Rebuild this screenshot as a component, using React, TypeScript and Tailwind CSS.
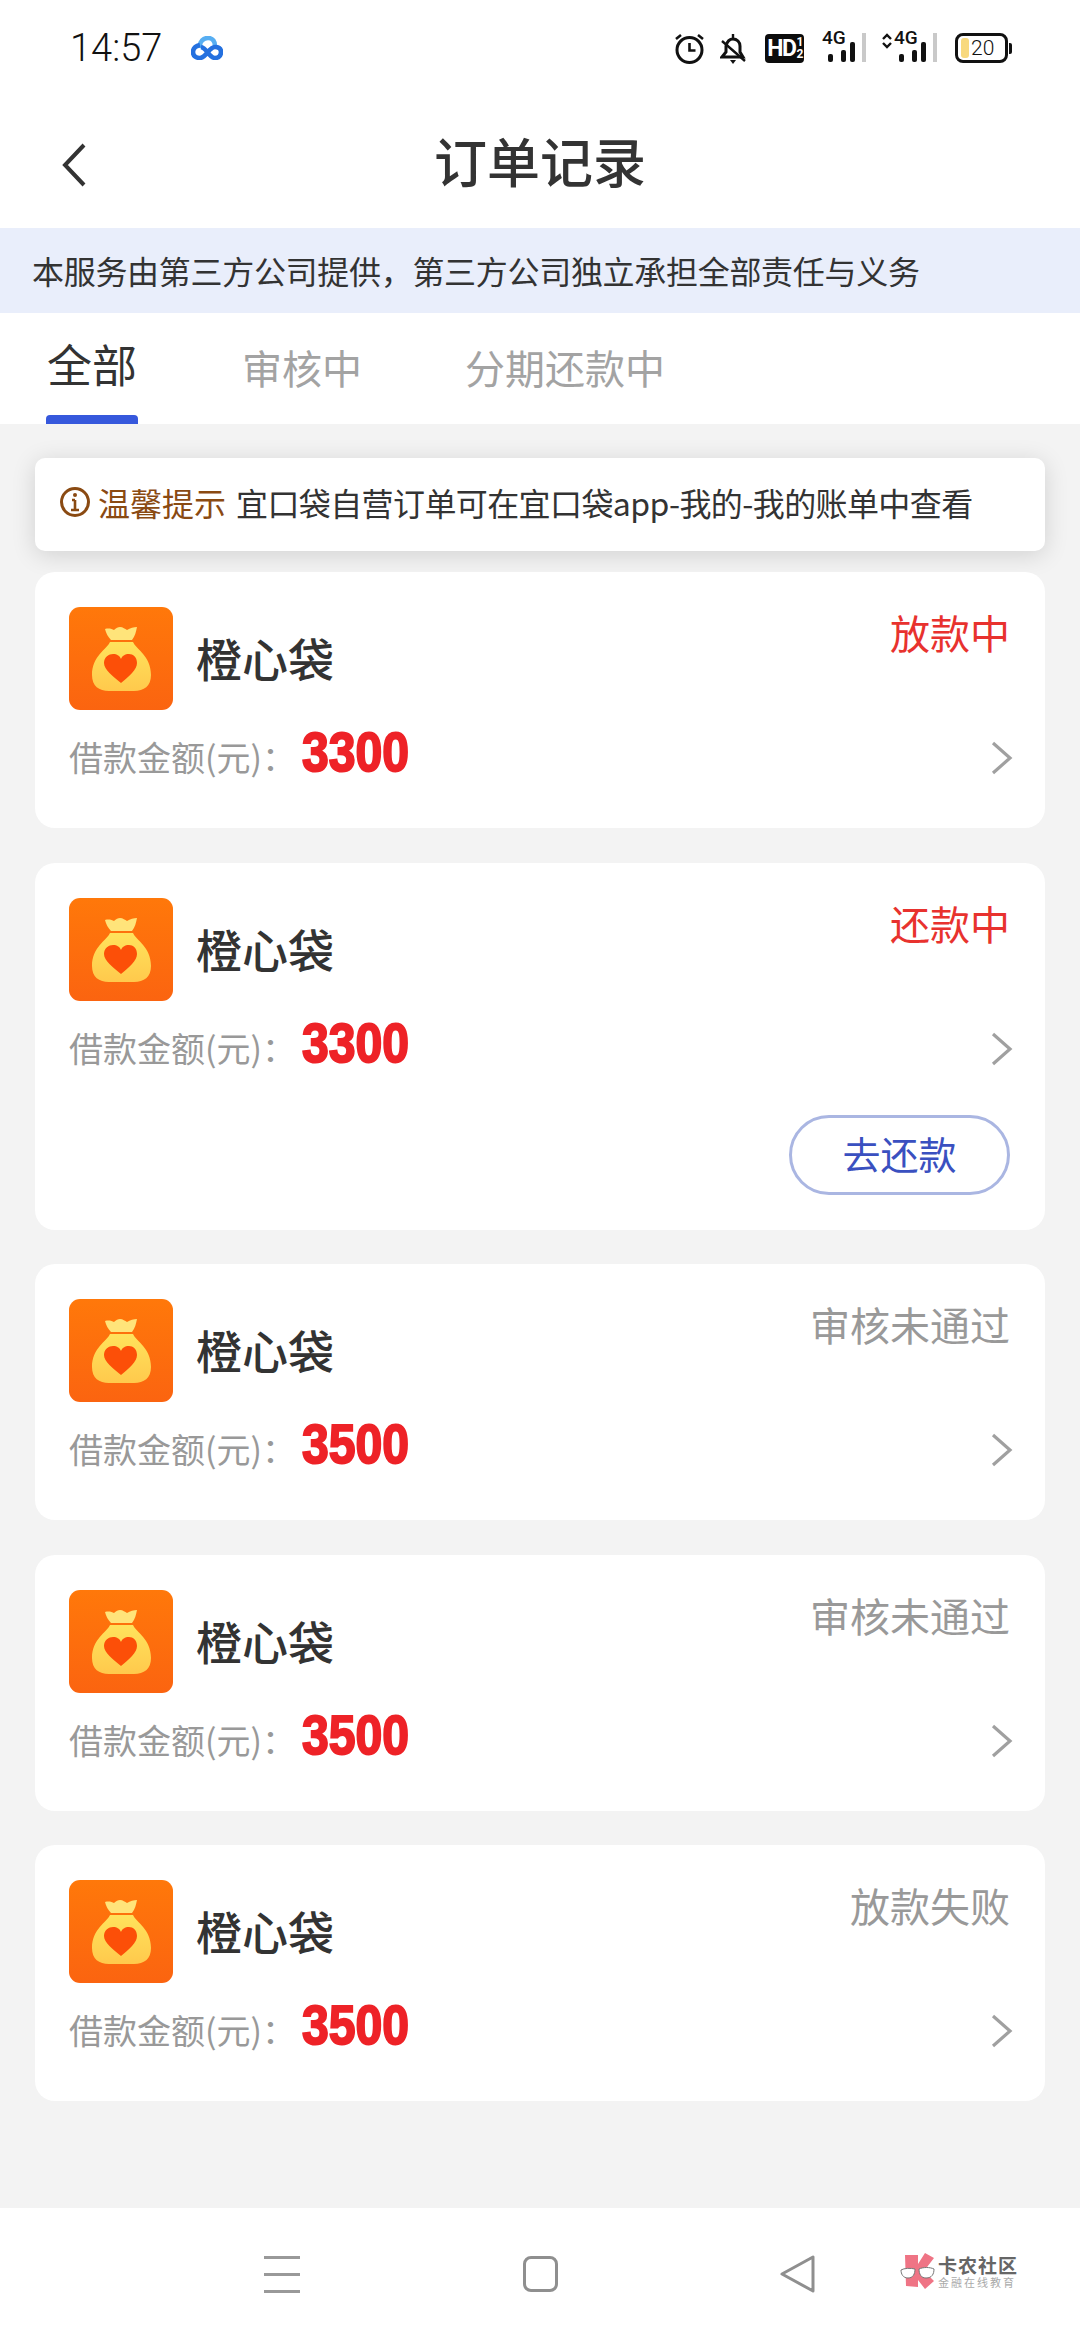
const orders = [
  { status: "放款中", color: "text-[#e8322e]", amount: "3300" },
  { status: "还款中", color: "text-[#e8322e]", amount: "3300", repay: true },
  { status: "审核未通过", color: "text-[#999999]", amount: "3500" },
  { status: "审核未通过", color: "text-[#999999]", amount: "3500" },
  { status: "放款失败", color: "text-[#999999]", amount: "3500" },
];

const BagLogo = () => (
  <svg width="104" height="103" viewBox="0 0 104 103" className="shrink-0">
    <defs>
      <linearGradient id="bagBg" x1="0" y1="0" x2="0" y2="1">
        <stop offset="0" stopColor="#ff780a" />
        <stop offset="1" stopColor="#fb6410" />
      </linearGradient>
      <linearGradient id="bagBody" x1="0" y1="0" x2="0" y2="1">
        <stop offset="0" stopColor="#ffe35c" />
        <stop offset="1" stopColor="#ffc94c" />
      </linearGradient>
    </defs>
    <rect width="104" height="103" rx="11" fill="url(#bagBg)" />
    <path d="M36 22c4-1 7 0 9 1 2-2 4-3 6-3 3 0 5 2 7 3 3-2 7-3 10-3-1 5-2 9-5 13H42c-3-3-5-7-6-11z" fill="#ffe47a" />
    <path d="M41 35h23c3 7 18 14 18 33 0 11-7 16-17 16H40c-10 0-17-5-17-16 0-19 15-26 18-33z" fill="url(#bagBody)" />
    <path d="M52 76C44 69 35 63 35 56c0-6 5-9 9-9 4 0 7 2 8 5 1-3 4-5 8-5 4 0 8 3 8 9 0 7-8 13-16 20z" fill="#fc4f08" />
  </svg>
);

const StatusIcons = () => (
  <div className="flex items-center">
    <svg width="31" height="32" viewBox="0 0 31 32" fill="none" stroke="#111" strokeWidth="3">
      <circle cx="15.5" cy="18" r="12.5" />
      <path d="M15.5 11v7.5h6M2 7l5-4M29 7l-5-4" strokeWidth="2.6" />
    </svg>
    <svg width="27" height="31" viewBox="0 0 27 31" fill="none" stroke="#111" strokeWidth="3" className="ml-[15px]">
      <path d="M2 24h21l-3-5v-6c0-4-3-7-7-7s-6 3-7 7v6z" />
      <path d="M13 1v4M2 8l23 20" strokeWidth="2.4" />
      <path d="M10 27h6l-3 4z" fill="#111" stroke="none" />
    </svg>
    <div className="ml-[18px] flex h-[29px] w-[39px] items-center justify-center rounded-[4px] bg-[#0c0c0c] font-['Roboto',sans-serif] text-[23px] leading-none font-bold tracking-[-1.5px] text-white">
      HD
      <span className="ml-[1px] flex flex-col text-[12px] leading-[12px]">
        <span>1</span>
        <span>2</span>
      </span>
    </div>
    <div className="relative ml-[18px] h-[30px] w-[44px]">
      <span className="absolute top-[-4px] left-0 font-['Roboto',sans-serif] text-[19px] leading-[18px] font-medium text-[#111]">4G</span>
      <svg width="44" height="30" viewBox="0 0 44 30">
        <rect x="6" y="21" width="5" height="8" rx="2" fill="#111" />
        <rect x="19" y="17" width="5" height="12" rx="2" fill="#111" />
        <rect x="28" y="9" width="5" height="20" rx="2" fill="#111" />
        <rect x="40" y="0" width="4" height="29" fill="#c9c9c9" />
      </svg>
    </div>
    <div className="relative ml-[16px] h-[30px] w-[55px]">
      <span className="absolute top-[-4px] left-[12px] font-['Roboto',sans-serif] text-[19px] leading-[18px] font-medium text-[#111]">4G</span>
      <svg width="55" height="30" viewBox="0 0 55 30">
        <path d="M1 6l4-4 4 4M1 10l4 4 4-4" fill="none" stroke="#111" strokeWidth="2.4" />
        <rect x="17" y="21" width="5" height="8" rx="2" fill="#111" />
        <rect x="30" y="17" width="5" height="12" rx="2" fill="#111" />
        <rect x="39" y="9" width="5" height="20" rx="2" fill="#111" />
        <rect x="51" y="0" width="4" height="29" fill="#c9c9c9" />
      </svg>
    </div>
    <div className="ml-[18px] flex items-center">
      <div className="relative flex h-[30px] w-[53px] items-center rounded-[8px] border-[3px] border-[#111] pl-[13px] font-['Roboto',sans-serif] text-[21px] leading-none font-light text-[#111]">
        <span className="absolute top-[2px] left-[3px] h-[20px] w-[8px] rounded-[3px] bg-[#f8d97e]" />
        <span className="relative">20</span>
      </div>
      <span className="ml-[1px] h-[11px] w-[3px] rounded-r-[2px] bg-[#111]" />
    </div>
  </div>
);

const OrderCard = ({ status, color, amount, repay }: { status: string; color: string; amount: string; repay?: boolean }) => (
  <div className="mx-[35px] mt-[34.5px] rounded-[20px] bg-white pt-[35px] pr-[35px] pb-[43px] pl-[34px] first:mt-[21px] has-[button]:pb-[35px]">
    <div className="flex items-start justify-between">
      <div className="flex items-center">
        <BagLogo />
        <span className="ml-[23px] pb-[3px] text-[46px] leading-[60px] font-medium text-[#333333]">橙心袋</span>
      </div>
      <span className={`mt-[-2px] text-[40px] leading-[54px] ${color}`}>{status}</span>
    </div>
    <div className="mt-[21px] flex h-[54px] items-center">
      <span className="w-[233px] pb-[2px] text-[34px] leading-[52px] text-[#999999]">借款金额(元)：</span>
      <span className="mb-[12px] origin-left scale-x-[0.86] font-['Liberation_Sans',sans-serif] text-[56px] leading-[48px] font-bold text-[#ee2227] [-webkit-text-stroke:2px_#ee2227]">
        {amount}
      </span>
      <svg width="22" height="34" viewBox="0 0 22 34" fill="none" stroke="#a0a0a0" strokeWidth="3.2" className="mr-[-3px] ml-auto">
        <path d="M2 2l17 15L2 32" />
      </svg>
    </div>
    {repay && (
      <div className="mt-[39px] flex justify-end">
        <button className="h-[80px] w-[221px] rounded-full border-[3px] border-[#aab6e2] pb-[4px] text-[38px] text-[#3a50c0]">去还款</button>
      </div>
    )}
  </div>
);

export default function App() {
  return (
    <div className="flex h-[2340px] w-[1080px] flex-col overflow-hidden bg-[#f3f3f3] font-['Noto_Sans_CJK_SC','Noto_Sans',sans-serif]">
      <div className="flex h-[228px] flex-col bg-white">
        <div className="flex h-[96px] items-center pr-[68px] pl-[70px]">
          <span className="font-['Roboto',sans-serif] text-[38px] leading-none font-light text-[#111]">14:57</span>
          <svg width="32" height="24" viewBox="0 0 32 24" fill="none" strokeWidth="4.6" className="ml-[29px]">
            <path d="M9 12C8 5 13 2 17 2c5 0 7 4 7 8" stroke="#57aef2" />
            <path d="M9 9c-4 1-7 3-7 7s3 6 7 6c6 0 9-11 15-11 4 0 6 2 6 5s-2 6-6 6c-6 0-8-10-14-11" stroke="#2470df" />
          </svg>
          <div className="ml-auto">
            <StatusIcons />
          </div>
        </div>
        <div className="relative flex flex-1 items-center justify-center">
          <svg width="30" height="46" viewBox="0 0 30 46" fill="none" stroke="#333" strokeWidth="4" className="absolute top-[46px] left-[60px]">
            <path d="M24 3L5 23l19 20" />
          </svg>
          <span className="mb-[4px] text-[53px] leading-none font-medium text-[#333333]">订单记录</span>
        </div>
      </div>

      <div className="flex h-[85px] items-center bg-[#e9eefb] pb-[2px] pl-[32px] text-[32px] leading-none tracking-[-0.3px] text-[#333333]">
        本服务由第三方公司提供，第三方公司独立承担全部责任与义务
      </div>

      <div className="flex h-[111px] items-start bg-white pl-[46px]">
        <div className="flex h-full w-[92px] flex-col items-center justify-between pt-[20px]">
          <span className="text-[45px] leading-[62px] text-[#333333]">全部</span>
          <span className="h-[9px] w-full rounded-t-[4px] bg-[#3658dc]" />
        </div>
        <span className="mt-[24px] ml-[104px] text-[40px] leading-[60px] text-[#a3a3a3]">审核中</span>
        <span className="mt-[24px] ml-[103px] text-[40px] leading-[60px] text-[#a3a3a3]">分期还款中</span>
      </div>

      <div className="mx-[35px] mt-[34px] flex h-[93px] items-center rounded-[10px] bg-white pb-[6px] pl-[24px] text-[32px] leading-none text-[#333333] shadow-[0_4px_24px_rgba(0,0,0,0.14)]">
        <svg width="32" height="32" viewBox="0 0 32 32" fill="none" stroke="#8a4a12" strokeWidth="3" className="mr-[7px]">
          <circle cx="16" cy="16" r="13.5" />
          <path d="M16 14v10M12 24h8M13 14h3" strokeWidth="2.6" />
          <circle cx="16" cy="9" r="2" fill="#8a4a12" stroke="none" />
        </svg>
        <span className="mr-[10px] text-[#8a4a12]">温馨提示</span>
        <span className="tracking-[-0.6px]">宜口袋自营订单可在宜口袋app-我的-我的账单中查看</span>
      </div>

      <div className="flex flex-1 flex-col">
        {orders.map((o, i) => (
          <OrderCard key={i} {...o} />
        ))}
      </div>

      <div className="relative flex h-[132px] items-center bg-white">
        <div className="ml-[264px] flex h-[37px] w-[36px] flex-col justify-between">
          <span className="h-[3px] bg-[#999999]" />
          <span className="h-[3px] bg-[#999999]" />
          <span className="h-[3px] bg-[#999999]" />
        </div>
        <span className="ml-[223px] h-[36px] w-[35px] rounded-[8px] border-[3px] border-[#8f8f8f]" />
        <svg width="36" height="38" viewBox="0 0 36 38" fill="none" stroke="#8f8f8f" strokeWidth="3" strokeLinejoin="round" className="ml-[222px]">
          <path d="M33 2v34L2 19z" />
        </svg>
        <div className="absolute top-[45px] left-[900px] flex items-center">
          <svg width="36" height="36" viewBox="0 0 36 36">
            <path d="M5 2h13v9L25 0l9 5-10 13 10 10-9 8-7-9v7L6 33z" fill="#ef7485" />
            <path d="M1 17c3-2 10-2 14-1 0 5-2 9-7 9-5 0-7-4-7-8zM19 16c4-2 11-2 15 0 0 5-2 9-8 9-5 0-7-4-7-9z" fill="#fff" stroke="#777" strokeWidth="1" />
          </svg>
          <div className="ml-[2px] flex flex-col">
            <span className="text-[19px] leading-[21px] font-bold tracking-[1px] text-[#666666]">卡农社区</span>
            <span className="mt-[1px] text-[11px] leading-[12px] tracking-[2px] text-[#aaaaaa]">金融在线教育</span>
          </div>
        </div>
      </div>
    </div>
  );
}
